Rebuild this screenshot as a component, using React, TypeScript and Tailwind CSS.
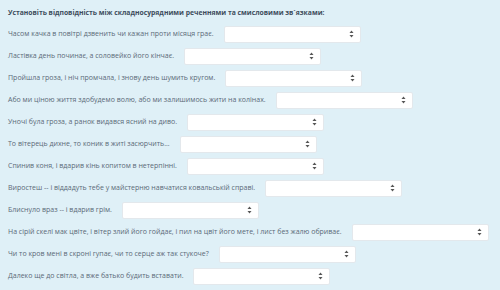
const rows = [
  "Часом качка в повітрі дзвенить чи кажан проти місяця грає.",
  "Ластівка день починає, а соловейко його кінчає.",
  "Пройшла гроза, і ніч промчала, і знову день шумить кругом.",
  "Або ми ціною життя здобудемо волю, або ми залишимось жити на колінах.",
  "Уночі була гроза, а ранок видався ясний на диво.",
  "То вітерець дихне, то коник в житі засюрчить...",
  "Спинив коня, і вдарив кінь копитом в нетерпінні.",
  "Виростеш -- і віддадуть тебе у майстерню навчатися ковальській справі.",
  "Блиснуло враз -- і вдарив грім.",
  "На сірій скелі мак цвіте, і вітер злий його гойдає, і пил на цвіт його мете, і лист без жалю обриває.",
  "Чи то кров мені в скроні гупає, чи то серце аж так стукоче?",
  "Далеко ще до світла, а вже батько будить вставати.",
];

function Arrows() {
  return (
    <svg width="5" height="8" viewBox="0 0 5 8" className="text-[#555]">
      <path d="M2.5 0.5 L4.5 3 L0.5 3 Z" fill="currentColor" />
      <path d="M2.5 7.5 L4.5 5 L0.5 5 Z" fill="currentColor" />
    </svg>
  );
}

export default function App() {
  return (
    <div
      className="w-[500px] h-[290px] bg-[#dff0f7] text-[#5b6a78] pl-[8px] pt-[7px] overflow-hidden"
      style={{ fontFamily: '"Open Sans", "Noto Sans", sans-serif' }}
    >
      <div className="text-[6.8px] font-bold text-[#3d4d5c] h-[12px] leading-[12px]">
        Установіть відповідність між складносурядними реченнями та смисловими зв`язками:
      </div>
      <div className="flex flex-col mt-[4px]">
        {rows.map((r) => (
          <div key={r} className="flex items-center h-[22px] gap-[10px] text-[7px] whitespace-nowrap">
            <span>{r}</span>
            <div className="w-[137px] h-[17px] bg-white rounded-[2px] border border-[#e3e8ec] flex items-center justify-end pr-[6px] shrink-0">
              <Arrows />
            </div>
          </div>
        ))}
      </div>
    </div>
  );
}
